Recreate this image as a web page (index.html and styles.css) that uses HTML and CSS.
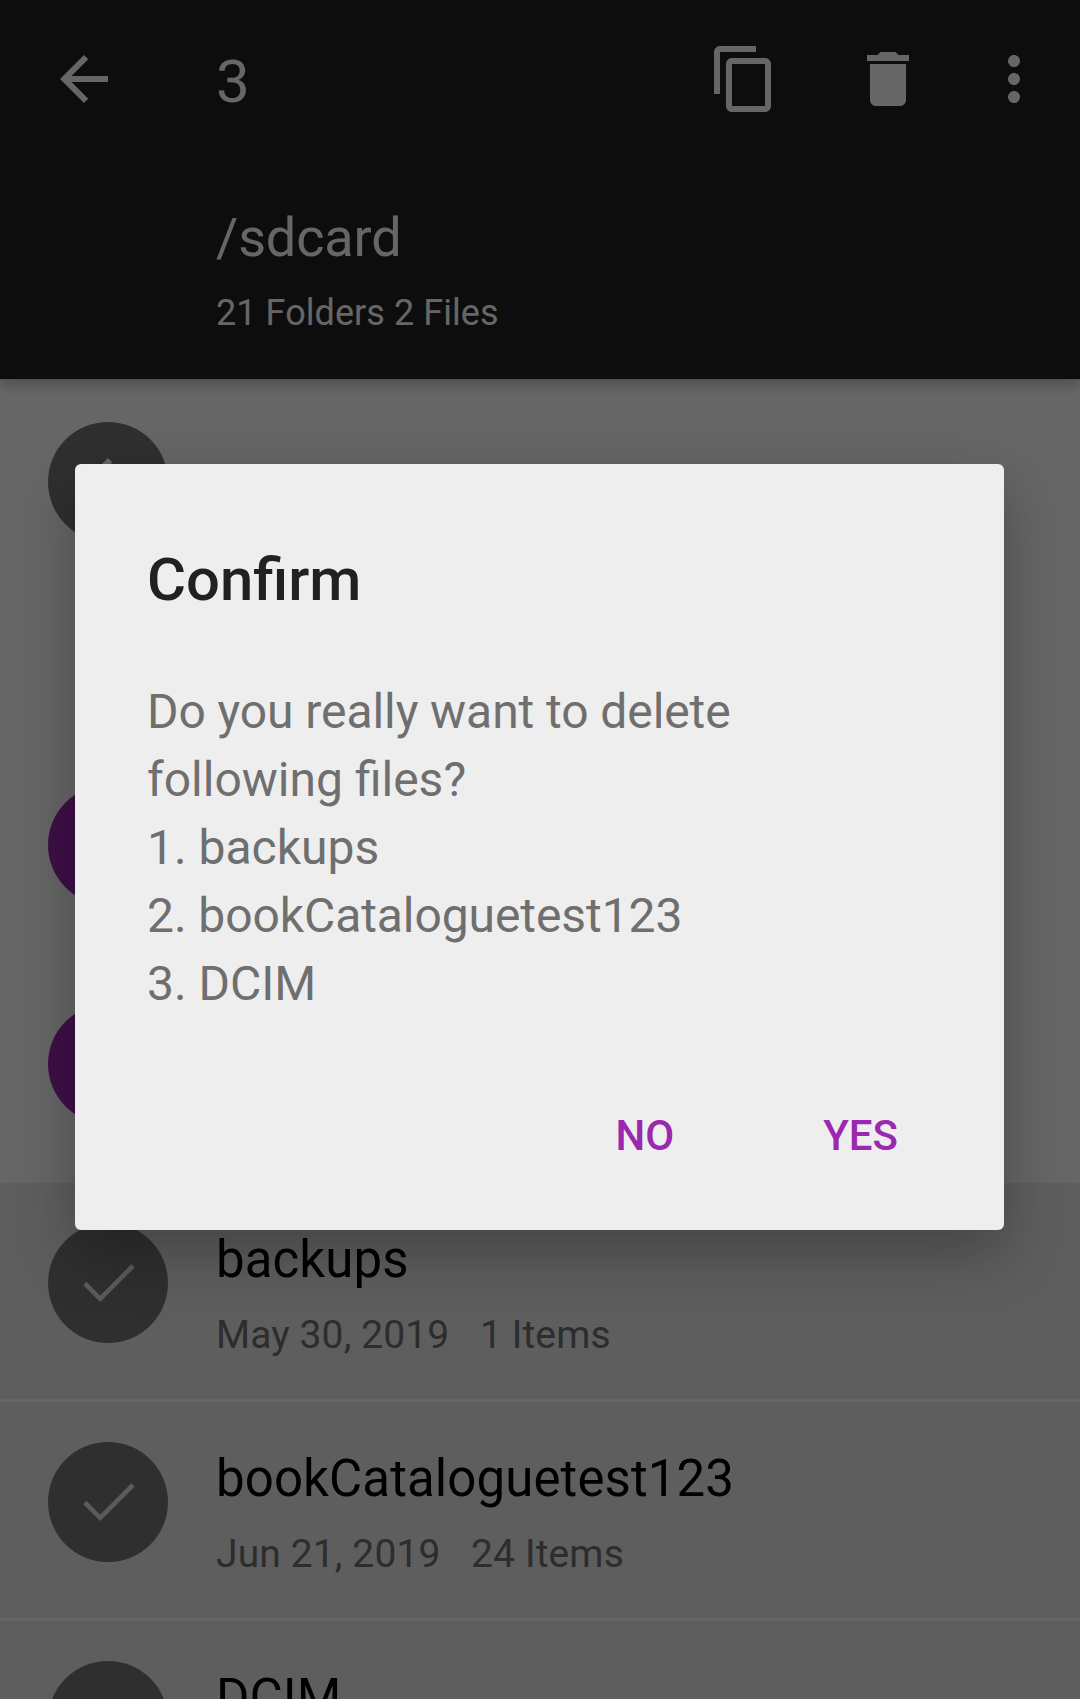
FILE: index.html
```html
<!DOCTYPE html>
<html lang="en">
<head>
<meta charset="utf-8">
<title>File manager</title>
<link rel="stylesheet" href="styles.css">
</head>
<body>
<div class="screen">
  <header class="header">
    <div class="toolbar">
      <svg class="icon" viewBox="0 0 24 24"><path d="M20 11H7.83l5.59-5.59L12 4l-8 8 8 8 1.41-1.41L7.83 13H20v-2z"/></svg>
      <span class="count">3</span>
      <svg class="icon icon-copy" viewBox="0 0 24 24"><path d="M16 1H4c-1.1 0-2 .9-2 2v14h2V3h12V1zm3 4H8c-1.1 0-2 .9-2 2v14c0 1.1.9 2 2 2h11c1.1 0 2-.9 2-2V7c0-1.1-.9-2-2-2zm0 16H8V7h11v14z"/></svg>
      <svg class="icon icon-delete" viewBox="0 0 24 24"><path d="M6 19c0 1.1.9 2 2 2h8c1.1 0 2-.9 2-2V7H6v12zM19 4h-3.5l-1-1h-5l-1 1H5v2h14V4z"/></svg>
      <svg class="icon icon-more" viewBox="0 0 24 24"><path d="M12 8c1.1 0 2-.9 2-2s-.9-2-2-2-2 .9-2 2 .9 2 2 2zm0 2c-1.1 0-2 .9-2 2s.9 2 2 2 2-.9 2-2-.9-2-2-2zm0 6c-1.1 0-2 .9-2 2s.9 2 2 2 2-.9 2-2-.9-2-2-2z"/></svg>
    </div>
    <div class="path">/sdcard</div>
    <div class="summary">21 Folders 2 Files</div>
  </header>
  <main class="list">
    <div class="row row-up">
      <div class="avatar"><svg class="icon" viewBox="0 0 24 24"><path d="M20 11H7.83l5.59-5.59L12 4l-8 8 8 8 1.41-1.41L7.83 13H20v-2z"/></svg></div>
    </div>
    <div class="row"><div class="avatar folder"></div></div>
    <div class="row"><div class="avatar folder"></div></div>
    <div class="row selected">
      <div class="avatar"><svg class="check" viewBox="0 0 72 72"><path d="M12.8 36.5L28.2 51.8L61 18.8"/></svg></div>
      <div class="info"><div class="name">backups</div><div class="meta"><span>May 30, 2019</span><span>1 Items</span></div></div>
    </div>
    <div class="row selected">
      <div class="avatar"><svg class="check" viewBox="0 0 72 72"><path d="M12.8 36.5L28.2 51.8L61 18.8"/></svg></div>
      <div class="info"><div class="name">bookCataloguetest123</div><div class="meta"><span>Jun 21, 2019</span><span>24 Items</span></div></div>
    </div>
    <div class="row selected">
      <div class="avatar"></div>
      <div class="info"><div class="name">DCIM</div></div>
    </div>
  </main>
  <div class="scrim">
    <section class="dialog">
      <h1 class="title">Confirm</h1>
      <p class="message"><span class="tight">Do you really want to delete</span><br>following files?<br>1. backups<br><span class="tight">2. bookCataloguetest123</span><br>3. DCIM</p>
      <div class="actions"><button class="button">NO</button><button class="button">YES</button></div>
    </section>
  </div>
</div>
</body>
</html>
```
FILE: styles.css
```css
* { box-sizing: border-box; }
body { margin: 0; font-family: Roboto, "Liberation Sans", sans-serif; }
.screen { position: relative; width: 1080px; height: 1699px; overflow: hidden; background: #fff; }

.header { position: relative; height: 379px; background: #212121; color: #fff; box-shadow: 0 5px 12px rgba(0,0,0,.26); }
.toolbar { display: flex; align-items: flex-start; height: 201px; padding: 43px 30px 0 48px; }
.icon { flex: none; width: 72px; height: 72px; fill: #fff; }
.count { flex: 1; margin: 4px 0 0 96px; font-size: 60px; line-height: 70px; }
.icon-delete { margin-left: 72px; }
.icon-more { margin-left: 54px; }
.path { padding-left: 216px; font-size: 54px; line-height: 74px; letter-spacing: -.15px; }
.summary { margin-top: 19px; padding-left: 216px; font-size: 36px; line-height: 38px; letter-spacing: .06px; }

.list { padding-top: 3px; }
.row { display: flex; height: 219px; padding: 40px 48px 0; border-bottom: 3px solid #fff; }
.row-up { height: 363px; }
.selected { background: #ebebeb; }
.avatar { display: flex; flex: none; align-items: center; justify-content: center; width: 120px; height: 120px; border-radius: 50%; background: #757575; }
.folder { background: #9c27b0; }
.check { width: 72px; height: 72px; fill: none; stroke: #e4e4e4; stroke-width: 4.6; }
.info { margin-left: 48px; }
.name { margin-top: 7px; font-size: 51px; line-height: 60px; letter-spacing: .1px; color: #000; white-space: nowrap; }
.meta { display: flex; gap: 30.5px; margin-top: 22px; font-size: 39px; line-height: 46px; letter-spacing: .12px; color: #707070; white-space: nowrap; }

.scrim { position: absolute; inset: 0; padding: 464px 76px 0 75px; background: rgba(0,0,0,.6); }
.dialog { height: 766px; padding: 81px 72px 0; border-radius: 6px; background: #eee; box-shadow: 0 24px 60px rgba(0,0,0,.28); }
.title { margin: 0; font-size: 59.8px; font-weight: 500; line-height: 70px; color: #212121; }
.message { margin: 63px 0 0; font-size: 48px; line-height: 68px; color: #6f6f6f; white-space: nowrap; }
.tight { letter-spacing: -.08px; }
.actions { display: flex; justify-content: flex-end; gap: 149px; margin: 93px 34px 0 0; }
.button { padding: 0; border: 0; background: none; font: 500 42px/50px Roboto, sans-serif; color: #9c27b0; }
```
